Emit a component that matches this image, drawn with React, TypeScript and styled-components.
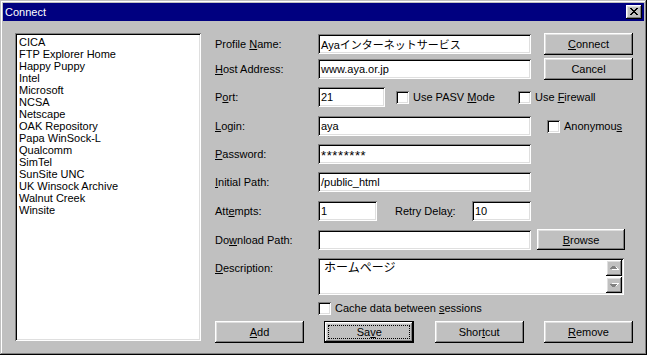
import React from "react";
import styled, { createGlobalStyle, css } from "styled-components";

const Global = createGlobalStyle`
  html, body { margin: 0; padding: 0; background: #c0c0c0; }
  body { font-family: "Liberation Sans", Arial, "Noto Sans CJK JP", sans-serif; font-size: 11px; color: #000; }
  * { box-sizing: border-box; }
`;

const FONT = `"Liberation Sans", Arial, "Noto Sans CJK JP", sans-serif`;

const raised = css`
  box-shadow: inset -1px -1px #000, inset 1px 1px #fff, inset -2px -2px #808080, inset 2px 2px #dfdfdf;
`;
const sunken = css`
  box-shadow: inset 1px 1px #808080, inset -1px -1px #fff, inset 2px 2px #000, inset -2px -2px #dfdfdf;
`;

const Win = styled.div`
  width: 647px;
  height: 355px;
  background: #c0c0c0;
  padding: 3px;
  display: flex;
  flex-direction: column;
  box-shadow: inset -1px -1px #000, inset 1px 1px #c0c0c0, inset -2px -2px #808080, inset 2px 2px #fff;
`;

const TitleBar = styled.div`
  height: 18px;
  background: #000080;
  color: #fff;
  display: flex;
  align-items: center;
  justify-content: space-between;
  padding: 0 2px 0 2px;
  font-family: ${FONT};
  font-size: 11px;
`;

const CloseBtn = styled.div`
  width: 16px;
  height: 14px;
  background: #c0c0c0;
  ${raised};
  display: flex;
  align-items: center;
  justify-content: center;
  padding: 0 1px 1px 0;
`;

const Body = styled.div`
  flex: 1;
  display: flex;
  padding: 12px 0 0 12px;
`;

const ListBox = styled.div`
  width: 186px;
  height: 308px;
  background: #fff;
  ${sunken};
  padding: 3px 4px 2px;
  margin-right: 14px;
  display: flex;
  flex-direction: column;
`;

const ListItem = styled.div`
  height: 12px;
  line-height: 12px;
  white-space: nowrap;
`;

const Form = styled.div`
  width: 418px;
  display: flex;
  flex-direction: column;
`;

const Row = styled.div<{ $top: number; $h: number; $align?: string }>`
  display: flex;
  align-items: ${(p) => p.$align || "center"};
  margin-top: ${(p) => p.$top}px;
  height: ${(p) => p.$h}px;
`;

const Label = styled.div<{ $w?: number; $pt?: number }>`
  width: ${(p) => p.$w ?? 103}px;
  flex: none;
  white-space: nowrap;
  padding-top: ${(p) => p.$pt ?? 0}px;
`;

const Key = styled.span`
  text-decoration: underline;
`;

const Field = styled.div<{ $w: number; $masked?: boolean }>`
  width: ${(p) => p.$w}px;
  height: 20px;
  flex: none;
  background: #fff;
  ${sunken};
  padding: 0 3px;
  display: flex;
  align-items: center;
  white-space: nowrap;
  overflow: hidden;
  font-size: ${(p) => (p.$masked ? 13 : 11)}px;
  letter-spacing: ${(p) => (p.$masked ? "0.6px" : "normal")};
  padding-top: ${(p) => (p.$masked ? 2 : 0)}px;
`;

const Button = styled.div<{ $w?: number; $h?: number; $ml?: number; $default?: boolean }>`
  width: ${(p) => p.$w ?? 89}px;
  height: ${(p) => p.$h ?? 22}px;
  margin-left: ${(p) => p.$ml ?? 0}px;
  flex: none;
  background: #c0c0c0;
  display: flex;
  align-items: center;
  justify-content: center;
  position: relative;
  ${(p) =>
    p.$default
      ? css`
          border: 1px solid #000;
          ${raised};
        `
      : raised};
`;

const Focus = styled.div`
  position: absolute;
  inset: 3px;
  border: 1px dotted #000;
`;

const Check = styled.div<{ $w?: number; $ml?: number }>`
  display: flex;
  align-items: center;
  gap: 4px;
  margin-left: ${(p) => p.$ml ?? 0}px;
  width: ${(p) => (p.$w ? `${p.$w}px` : "auto")};
  flex: none;
  white-space: nowrap;
`;

const Box = styled.div`
  width: 13px;
  height: 13px;
  background: #fff;
  ${sunken};
  flex: none;
`;

const TextArea = styled.div`
  width: 306px;
  height: 37px;
  background: #fff;
  ${sunken};
  padding: 2px;
  display: flex;
`;

const TextContent = styled.div`
  flex: 1;
  padding: 1px 0 0 4px;
  font-size: 12px;
  line-height: 14px;
`;

const ScrollCol = styled.div`
  width: 16px;
  display: flex;
  flex-direction: column;
  gap: 1px;
`;

const ScrollBtn = styled.div`
  width: 16px;
  height: 16px;
  background: #c0c0c0;
  ${raised};
  display: flex;
  align-items: center;
  justify-content: center;
`;

const Spacer = styled.div<{ $w: number }>`
  width: ${(p) => p.$w}px;
  flex: none;
`;

const BottomRow = styled(Row)`
  justify-content: space-between;
`;

const Arrow = ({ down }: { down?: boolean }) => (
  <svg width="9" height="6" viewBox="0 0 9 6" shapeRendering="crispEdges">
    <g transform={down ? "translate(0,6) scale(1,-1)" : undefined}>
      <path d="M5 1h1v1h1v1h1v1h-7v-1h1v-1h1v-1h1z" fill="#fff" transform="translate(1,1)" />
      <path d="M4 1h1v1h1v1h1v1h-7v-1h1v-1h1v-1h1z" fill="#808080" />
    </g>
  </svg>
);

const CloseGlyph = () => (
  <svg width="8" height="7" viewBox="0 0 8 7" shapeRendering="crispEdges">
    <path
      d="M0 0h2v1h-2zM6 0h2v1h-2zM1 1h2v1h-2zM5 1h2v1h-2zM2 2h4v1h-4zM3 3h2v1h-2zM2 4h4v1h-4zM1 5h2v1h-2zM5 5h2v1h-2zM0 6h2v1h-2zM6 6h2v1h-2z"
      fill="#000"
    />
  </svg>
);

const sites = [
  "CICA",
  "FTP Explorer Home",
  "Happy Puppy",
  "Intel",
  "Microsoft",
  "NCSA",
  "Netscape",
  "OAK Repository",
  "Papa WinSock-L",
  "Qualcomm",
  "SimTel",
  "SunSite UNC",
  "UK Winsock Archive",
  "Walnut Creek",
  "Winsite",
];

export default function App() {
  return (
    <>
      <Global />
      <Win>
        <TitleBar>
          <span>Connect</span>
          <CloseBtn>
            <CloseGlyph />
          </CloseBtn>
        </TitleBar>
        <Body>
          <ListBox>
            {sites.map((s) => (
              <ListItem key={s}>{s}</ListItem>
            ))}
          </ListBox>
          <Form>
            <Row $top={0} $h={22}>
              <Label>
                Profile <Key>N</Key>ame:
              </Label>
              <Field $w={213}>Ayaインターネットサービス</Field>
              <Button $ml={13}>
                <span>
                  <Key>C</Key>onnect
                </span>
              </Button>
            </Row>
            <Row $top={3} $h={22}>
              <Label>
                <Key>H</Key>ost Address:
              </Label>
              <Field $w={213}>www.aya.or.jp</Field>
              <Button $ml={13}>Cancel</Button>
            </Row>
            <Row $top={7} $h={20}>
              <Label>
                P<Key>o</Key>rt:
              </Label>
              <Field $w={67}>21</Field>
              <Check $ml={11} $w={122}>
                <Box />
                <span>
                  Use PASV <Key>M</Key>ode
                </span>
              </Check>
              <Check>
                <Box />
                <span>
                  Use <Key>F</Key>irewall
                </span>
              </Check>
            </Row>
            <Row $top={9} $h={20}>
              <Label>
                <Key>L</Key>ogin:
              </Label>
              <Field $w={213}>aya</Field>
              <Check $ml={16}>
                <Box />
                <span>
                  Anonymou<Key>s</Key>
                </span>
              </Check>
            </Row>
            <Row $top={8} $h={20}>
              <Label>
                <Key>P</Key>assword:
              </Label>
              <Field $w={213} $masked>
                ********
              </Field>
            </Row>
            <Row $top={8} $h={20}>
              <Label>
                <Key>I</Key>nitial Path:
              </Label>
              <Field $w={213}>/public_html</Field>
            </Row>
            <Row $top={9} $h={20}>
              <Label>
                Att<Key>e</Key>mpts:
              </Label>
              <Field $w={59}>1</Field>
              <Spacer $w={18} />
              <Label $w={77}>
                Retry Dela<Key>y</Key>:
              </Label>
              <Field $w={59}>10</Field>
            </Row>
            <Row $top={8} $h={21}>
              <Label>
                Do<Key>w</Key>nload Path:
              </Label>
              <Field $w={213}></Field>
              <Button $w={88} $h={21} $ml={6}>
                <span>
                  <Key>B</Key>rowse
                </span>
              </Button>
            </Row>
            <Row $top={8} $h={37} $align="flex-start">
              <Label $pt={4}>
                <Key>D</Key>escription:
              </Label>
              <TextArea>
                <TextContent>ホームページ</TextContent>
                <ScrollCol>
                  <ScrollBtn>
                    <Arrow />
                  </ScrollBtn>
                  <ScrollBtn>
                    <Arrow down />
                  </ScrollBtn>
                </ScrollCol>
              </TextArea>
            </Row>
            <Row $top={6} $h={14}>
              <Spacer $w={103} />
              <Check>
                <Box />
                <span>
                  Cache data between <Key>s</Key>essions
                </span>
              </Check>
            </Row>
            <BottomRow $top={6} $h={22}>
              <Button>
                <span>
                  <Key>A</Key>dd
                </span>
              </Button>
              <Button $w={90} $default>
                <Focus />
                <span>
                  Sa<Key>v</Key>e
                </span>
              </Button>
              <Button>
                <span>
                  Shor<Key>t</Key>cut
                </span>
              </Button>
              <Button>
                <span>
                  <Key>R</Key>emove
                </span>
              </Button>
            </BottomRow>
          </Form>
        </Body>
      </Win>
    </>
  );
}
